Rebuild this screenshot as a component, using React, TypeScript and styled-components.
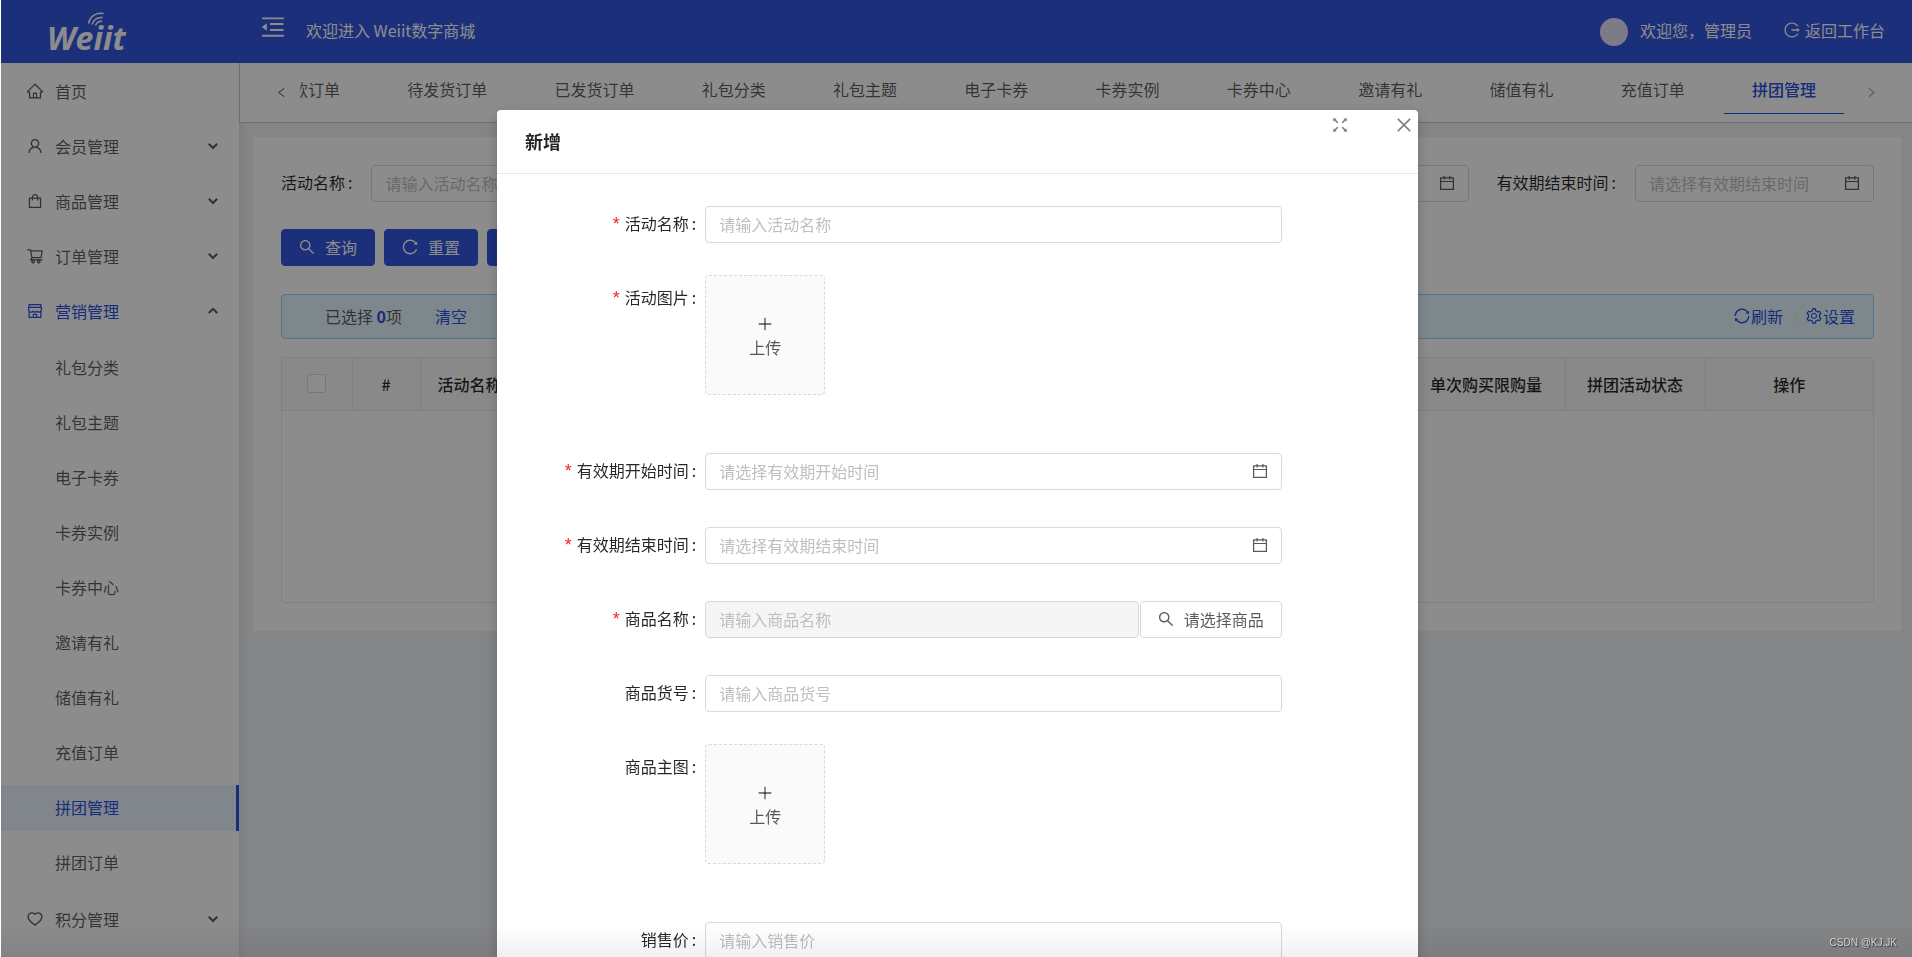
import React from 'react';
import styled, { createGlobalStyle, css } from 'styled-components';
import {
  AiOutlineCalendar,
  AiOutlineClose,
  AiOutlineFullscreen,
  AiOutlineHeart,
  AiOutlineHome,
  AiOutlineLeft,
  AiOutlineLogout,
  AiOutlineMenuFold,
  AiOutlinePlus,
  AiOutlineReload,
  AiOutlineRight,
  AiOutlineSearch,
  AiOutlineSetting,
  AiOutlineShop,
  AiOutlineShopping,
  AiOutlineShoppingCart,
  AiOutlineSync,
  AiOutlineUser,
} from 'react-icons/ai';

const color = {
  primary: '#2a50e0',
  header: '#3357e1',
  text: 'rgba(0, 0, 0, 0.65)',
  heading: 'rgba(0, 0, 0, 0.85)',
  hint: '#bfbfbf',
  border: '#d9d9d9',
  split: '#e8e8e8',
  page: '#f0f2f5',
};

const GlobalStyle = createGlobalStyle`
  *, *::before, *::after { box-sizing: border-box; }
  body {
    margin: 0;
    background: #fff;
    color: ${color.text};
    font: 16px/24px "Noto Sans CJK SC", "Noto Sans", sans-serif;
  }
  button, input { font: inherit; color: inherit; }
  button { margin: 0; padding: 0; border: 0; background: none; cursor: pointer; }
  a { color: inherit; text-decoration: none; }
  ul { margin: 0; padding: 0; list-style: none; }
  svg { flex: none; display: block; }
`;

const Screen = styled.div`
  display: flex;
  flex-direction: column;
  height: 100vh;
  margin-left: 1px;
  overflow: hidden;
  background: ${color.page};
`;

/* ---------- top bar ---------- */

const Header = styled.header`
  flex: none;
  display: flex;
  align-items: center;
  height: 63px;
  padding-right: 27px;
  background: ${color.header};
  color: #fff;
`;

const Logo = styled.a`
  display: flex;
  width: 258px;
  padding: 0 0 2px 46px;
`;

const LogoSvg = styled.svg`
  overflow: visible;
`;

const FoldButton = styled.button`
  margin-bottom: 10px;
`;

const Welcome = styled.span`
  flex: 1;
  margin-left: 19px;
  padding-bottom: 4px;
`;

const Avatar = styled.span`
  width: 28px;
  height: 28px;
  border-radius: 50%;
  background: #e4e2f4;
`;

const UserName = styled.span`
  margin: 0 31px 0 12px;
  padding-bottom: 4px;
`;

const IconLink = styled.a`
  display: flex;
  align-items: center;
  gap: 4px;
  padding-bottom: 3px;
`;

/* ---------- side menu ---------- */

const Body = styled.div`
  flex: 1;
  display: flex;
  min-height: 0;
`;

const Sidebar = styled.nav`
  flex: none;
  width: 238px;
  padding-top: 6px;
  overflow: hidden;
  background: #fff;
  box-shadow: 2px 0 8px rgba(29, 35, 41, 0.08);
`;

const MenuList = styled.ul`
  display: flex;
  flex-direction: column;
  gap: 9px;
`;

const SubMenu = styled(MenuList)`
  padding: 10px 0 2px;
`;

const menuRow = css`
  display: flex;
  align-items: center;
  width: 100%;
  height: 46px;
  padding-bottom: 2px;
  text-align: left;
`;

const MenuButton = styled.button<{ $active?: boolean }>`
  ${menuRow}
  gap: 11px;
  padding: 0 20px 2px 25px;
  color: ${(p) => (p.$active ? color.primary : color.text)};
`;

const MenuText = styled.span`
  flex: 1;
`;

const SubLink = styled.a<{ $active?: boolean }>`
  ${menuRow}
  padding-left: 54px;
  border-right: 3px solid transparent;
  ${(p) =>
    p.$active &&
    css`
      color: ${color.primary};
      background: #ecf5ff;
      border-color: ${color.primary};
    `}
`;

const ArrowSvg = styled.svg`
  color: ${color.text};
`;

/* ---------- tabs ---------- */

const Main = styled.main`
  flex: 1;
  min-width: 0;
`;

const TabBar = styled.div`
  display: flex;
  height: 60px;
  padding-right: 34px;
  background: #fff;
  border-left: 1px solid #c8c8c8;
  border-bottom: 1px solid #c8c8c8;
`;

const TabScroll = styled.button<{ $dim?: boolean }>`
  flex: none;
  padding: 0;
  opacity: ${(p) => (p.$dim ? 0.6 : 0.9)};
`;

const PrevTabs = styled(TabScroll)`
  width: 60px;
  padding-left: 35px;
`;

const NextTabs = styled(TabScroll)`
  padding-left: 21px;
`;

const TabClip = styled.div`
  flex: 1;
  overflow: hidden;
`;

const TabList = styled.div`
  display: flex;
  justify-content: space-between;
  margin-left: -68px;
`;

const Tab = styled.a<{ $active?: boolean }>`
  flex: none;
  height: 51px;
  padding: 14px 28px 0;
  border-bottom: 1px solid ${(p) => (p.$active ? color.primary : 'transparent')};
  color: ${(p) => (p.$active ? color.primary : color.text)};
  font-weight: ${(p) => (p.$active ? 500 : 400)};
`;

/* ---------- list page ---------- */

const Card = styled.section`
  margin: 14px 10px 0 14px;
  padding: 28px;
  border-radius: 3px;
  background: #fff;
`;

const SearchForm = styled.form`
  display: flex;
  gap: 28px;
`;

const SearchItem = styled.div<{ $grow?: boolean }>`
  display: flex;
  align-items: center;
  gap: 19px;
  flex: ${(p) => (p.$grow ? '1' : 'none')};
`;

const Label = styled.label`
  padding-bottom: 3px;
  color: ${color.heading};
  white-space: nowrap;
  &::after {
    content: ':';
    margin-left: 3px;
  }
`;

const Required = styled.span`
  margin-right: 5px;
  color: #f5222d;
  font-family: "Liberation Sans", sans-serif;
  font-size: 18px;
`;

const InputBox = styled.div<{ $narrow?: boolean; $disabled?: boolean }>`
  flex: ${(p) => (p.$narrow ? 'none' : '1')};
  display: flex;
  align-items: center;
  width: ${(p) => (p.$narrow ? '239px' : 'auto')};
  min-width: 0;
  height: 37px;
  padding: 0 12px 2px 13px;
  border: 1px solid ${color.border};
  border-radius: 4px;
  background: ${(p) => (p.$disabled ? '#f5f5f5' : '#fff')};
`;

const TextInput = styled.input`
  flex: 1;
  min-width: 0;
  padding: 0;
  border: 0;
  outline: 0;
  background: none;
  &::placeholder {
    color: ${color.hint};
    opacity: 1;
  }
`;

const Actions = styled.div`
  display: flex;
  gap: 9px;
  margin-top: 27px;
`;

const Button = styled.button<{ $primary?: boolean }>`
  flex: none;
  display: flex;
  align-items: center;
  gap: 9px;
  height: 37px;
  padding: 0 17px 2px 16px;
  border: 1px solid ${(p) => (p.$primary ? color.header : color.border)};
  border-radius: 4px;
  background: ${(p) => (p.$primary ? color.header : '#fff')};
  color: ${(p) => (p.$primary ? '#fff' : color.text)};
`;

const SelectionBar = styled.div`
  display: flex;
  align-items: center;
  height: 45px;
  margin: 28px 0 18px;
  padding: 0 18px 1px 43px;
  border: 1px solid #91d5ff;
  border-radius: 4px;
  background: #e6f7ff;
`;

const Count = styled.b`
  color: ${color.primary};
  font-weight: 700;
`;

const BarText = styled.span`
  flex: 1;
`;

const ClearLink = styled.a`
  margin-left: 33px;
  color: ${color.primary};
`;

const ToolButton = styled.button`
  display: flex;
  align-items: center;
  color: ${color.primary};
`;

const Divider = styled.span`
  width: 1px;
  height: 15px;
  margin: 0 8px 0 13px;
  background: ${color.split};
`;

const TableFrame = styled.div`
  border: 1px solid ${color.split};
  border-radius: 4px;
  overflow: hidden;
`;

const Table = styled.table`
  width: 100%;
  table-layout: fixed;
  border-collapse: collapse;
`;

const Th = styled.th<{ $width?: number; $left?: boolean }>`
  width: ${(p) => (p.$width ? `${p.$width}px` : 'auto')};
  height: 52px;
  padding: 0 17px;
  border-bottom: 1px solid ${color.split};
  border-right: 1px solid ${color.split};
  background: #fafafa;
  color: ${color.heading};
  font-weight: 500;
  text-align: ${(p) => (p.$left ? 'left' : 'center')};
  white-space: nowrap;
  &:last-child { border-right: 0; }
`;

const EmptyCell = styled.td`
  height: 192px;
  padding: 0;
`;

const Checkbox = styled.input`
  appearance: none;
  display: block;
  width: 19px;
  height: 19px;
  margin: 0 auto;
  border: 1px solid ${color.border};
  border-radius: 3px;
  background: #fff;
`;

/* ---------- dialog ---------- */

const Mask = styled.div`
  position: fixed;
  inset: 0 0 0 1px;
  display: flex;
  justify-content: center;
  align-items: flex-start;
  padding: 110px 0 0 2px;
  overflow: hidden;
  background: rgba(0, 0, 0, 0.45);
`;

const Dialog = styled.section`
  width: 921px;
  border-radius: 4px;
  background: #fff;
  box-shadow: 0 4px 14px rgba(0, 0, 0, 0.2);
`;

const DialogHeader = styled.header`
  display: flex;
  align-items: flex-start;
  height: 64px;
  padding: 5px 4px 0 28px;
  border-bottom: 1px solid ${color.split};
`;

const DialogTitle = styled.h2`
  flex: 1;
  margin: 14px 0 0;
  color: ${color.heading};
  font-size: 18px;
  line-height: 24px;
  font-weight: 700;
`;

const DialogTool = styled.button`
  margin-left: 44px;
  color: rgba(0, 0, 0, 0.5);
`;

const DialogForm = styled.form`
  padding: 27px 28px;
`;

const FormRow = styled.div<{ $upload?: boolean }>`
  display: grid;
  grid-template-columns: 5fr 16fr 3fr;
  align-items: start;
  padding-bottom: ${(p) => (p.$upload ? 53 : 32)}px;
`;

const FormLabel = styled(Label)`
  padding: 10px 9px 0 0;
  text-align: right;
`;

const Control = styled.div<{ $upload?: boolean }>`
  display: flex;
  gap: 1px;
  padding-top: ${(p) => (p.$upload ? 0 : 5)}px;
`;

const UploadButton = styled.button`
  display: flex;
  flex-direction: column;
  align-items: center;
  justify-content: center;
  gap: 2px;
  width: 120px;
  height: 120px;
  padding-top: 3px;
  border: 1px dashed ${color.border};
  border-radius: 4px;
  background: #fafafa;
`;

const BottomShade = styled.div`
  position: fixed;
  inset: auto 0 0 1px;
  height: 32px;
  background: linear-gradient(rgba(0, 0, 0, 0), rgba(0, 0, 0, 0.06));
  pointer-events: none;
`;

const Watermark = styled.span`
  position: fixed;
  right: 15px;
  bottom: 7px;
  color: #d2d2d2;
  font: 10px/14px "Liberation Sans", sans-serif;
  text-shadow: 1px 1px 1px rgba(0, 0, 0, 0.6);
`;

/* ---------- pieces ---------- */

const Chevron = ({ up }: { up?: boolean }) => (
  <ArrowSvg width="12" height="12" viewBox="0 0 12 12" fill="none" stroke="currentColor" strokeWidth="2">
    <path d={up ? 'M1.8 8 6 3.8 10.2 8' : 'M1.8 3.8 6 8l4.2-4.2'} />
  </ArrowSvg>
);

const BrandMark = () => (
  <LogoSvg width="96" height="48" viewBox="0 0 96 48" fill="none" role="img" aria-label="Weiit">
    <text x="0" y="43" fill="#fff" fontFamily="'Open Sans', sans-serif" fontSize="32" fontWeight="700" fontStyle="italic">
      Weiit
    </text>
    <g stroke="#fff" strokeWidth="1.5">
      <path d="M41.5 16.5C43 10 48 5.5 56.5 6.5" />
      <path d="M45 17.5C46.5 13 50 10 55.5 10.5" />
      <path d="M48.5 18.5C49.5 15.8 51.5 14 55 14.3" />
    </g>
  </LogoSvg>
);

const topMenu = [
  { text: '会员管理', Icon: AiOutlineUser },
  { text: '商品管理', Icon: AiOutlineShopping },
  { text: '订单管理', Icon: AiOutlineShoppingCart },
];

const marketing = [
  '礼包分类', '礼包主题', '电子卡券', '卡券实例', '卡券中心',
  '邀请有礼', '储值有礼', '充值订单', '拼团管理', '拼团订单',
];

const tabs = [
  '待付款订单', '待发货订单', '已发货订单', '礼包分类', '礼包主题', '电子卡券',
  '卡券实例', '卡券中心', '邀请有礼', '储值有礼', '充值订单', '拼团管理',
];

const current = '拼团管理';

type FieldKind = 'text' | 'date' | 'upload' | 'picker';

const fields: { id: string; label: string; kind: FieldKind; hint?: string; required?: boolean }[] = [
  { id: 'name', label: '活动名称', kind: 'text', hint: '请输入活动名称', required: true },
  { id: 'image', label: '活动图片', kind: 'upload', required: true },
  { id: 'start', label: '有效期开始时间', kind: 'date', hint: '请选择有效期开始时间', required: true },
  { id: 'end', label: '有效期结束时间', kind: 'date', hint: '请选择有效期结束时间', required: true },
  { id: 'goods', label: '商品名称', kind: 'picker', hint: '请输入商品名称', required: true },
  { id: 'sku', label: '商品货号', kind: 'text', hint: '请输入商品货号' },
  { id: 'cover', label: '商品主图', kind: 'upload' },
  { id: 'price', label: '销售价', kind: 'text', hint: '请输入销售价' },
];

const Field = ({ id, kind, hint }: { id: string; kind: FieldKind; hint?: string }) => {
  if (kind === 'upload') {
    return (
      <UploadButton type="button" id={id}>
        <AiOutlinePlus size={18} />
        上传
      </UploadButton>
    );
  }
  return (
    <>
      <InputBox $disabled={kind === 'picker'}>
        <TextInput id={id} placeholder={hint} disabled={kind === 'picker'} />
        {kind === 'date' && <AiOutlineCalendar size={18} />}
      </InputBox>
      {kind === 'picker' && (
        <Button type="button">
          <AiOutlineSearch size={18} />
          请选择商品
        </Button>
      )}
    </>
  );
};

export default function App() {
  return (
    <>
      <GlobalStyle />
      <Screen>
        <Header>
          <Logo href="#">
            <BrandMark />
          </Logo>
          <FoldButton aria-label="收起菜单">
            <AiOutlineMenuFold size={28} />
          </FoldButton>
          <Welcome>欢迎进入 Weiit数字商城</Welcome>
          <Avatar />
          <UserName>欢迎您，管理员</UserName>
          <IconLink href="#">
            <AiOutlineLogout size={18} />
            返回工作台
          </IconLink>
        </Header>

        <Body>
          <Sidebar>
            <MenuList>
              <li>
                <MenuButton>
                  <AiOutlineHome size={18} />
                  <MenuText>首页</MenuText>
                </MenuButton>
              </li>
              {topMenu.map(({ text, Icon }) => (
                <li key={text}>
                  <MenuButton>
                    <Icon size={18} />
                    <MenuText>{text}</MenuText>
                    <Chevron />
                  </MenuButton>
                </li>
              ))}
              <li>
                <MenuButton $active>
                  <AiOutlineShop size={18} />
                  <MenuText>营销管理</MenuText>
                  <Chevron up />
                </MenuButton>
                <SubMenu>
                  {marketing.map((text) => (
                    <li key={text}>
                      <SubLink href="#" $active={text === current}>{text}</SubLink>
                    </li>
                  ))}
                </SubMenu>
              </li>
              <li>
                <MenuButton>
                  <AiOutlineHeart size={18} />
                  <MenuText>积分管理</MenuText>
                  <Chevron />
                </MenuButton>
              </li>
            </MenuList>
          </Sidebar>

          <Main>
            <TabBar>
              <PrevTabs aria-label="上一页">
                <AiOutlineLeft size={13} />
              </PrevTabs>
              <TabClip>
                <TabList>
                  {tabs.map((text) => (
                    <Tab key={text} href="#" $active={text === current}>{text}</Tab>
                  ))}
                </TabList>
              </TabClip>
              <NextTabs $dim aria-label="下一页">
                <AiOutlineRight size={13} />
              </NextTabs>
            </TabBar>

            <Card>
              <SearchForm>
                <SearchItem $grow>
                  <Label htmlFor="q-name">活动名称</Label>
                  <InputBox>
                    <TextInput id="q-name" placeholder="请输入活动名称" />
                  </InputBox>
                </SearchItem>
                <SearchItem>
                  <Label htmlFor="q-start">有效期开始时间</Label>
                  <InputBox $narrow>
                    <TextInput id="q-start" placeholder="请选择有效期开始时间" />
                    <AiOutlineCalendar size={18} />
                  </InputBox>
                </SearchItem>
                <SearchItem>
                  <Label htmlFor="q-end">有效期结束时间</Label>
                  <InputBox $narrow>
                    <TextInput id="q-end" placeholder="请选择有效期结束时间" />
                    <AiOutlineCalendar size={18} />
                  </InputBox>
                </SearchItem>
              </SearchForm>

              <Actions>
                <Button $primary>
                  <AiOutlineSearch size={18} />
                  查询
                </Button>
                <Button $primary>
                  <AiOutlineReload size={18} />
                  重置
                </Button>
                <Button $primary>
                  <AiOutlinePlus size={18} />
                  新增
                </Button>
              </Actions>

              <SelectionBar>
                <BarText>
                  已选择 <Count>0</Count>项
                  <ClearLink href="#">清空</ClearLink>
                </BarText>
                <ToolButton>
                  <AiOutlineSync size={18} />
                  刷新
                </ToolButton>
                <Divider />
                <ToolButton>
                  <AiOutlineSetting size={18} />
                  设置
                </ToolButton>
              </SelectionBar>

              <TableFrame>
                <Table>
                  <thead>
                    <tr>
                      <Th $width={70}>
                        <Checkbox type="checkbox" aria-label="全选" />
                      </Th>
                      <Th $width={68}>#</Th>
                      <Th $left>活动名称</Th>
                      <Th $width={158}>单次购买限购量</Th>
                      <Th $width={140}>拼团活动状态</Th>
                      <Th $width={168}>操作</Th>
                    </tr>
                  </thead>
                  <tbody>
                    <tr>
                      <EmptyCell colSpan={6} />
                    </tr>
                  </tbody>
                </Table>
              </TableFrame>
            </Card>
          </Main>
        </Body>
      </Screen>

      <Mask>
        <Dialog role="dialog" aria-modal="true" aria-labelledby="dialog-title">
          <DialogHeader>
            <DialogTitle id="dialog-title">新增</DialogTitle>
            <DialogTool aria-label="全屏">
              <AiOutlineFullscreen size={20} />
            </DialogTool>
            <DialogTool aria-label="关闭">
              <AiOutlineClose size={20} />
            </DialogTool>
          </DialogHeader>
          <DialogForm>
            {fields.map((f) => (
              <FormRow key={f.id} $upload={f.kind === 'upload'}>
                <FormLabel htmlFor={f.id}>
                  {f.required && <Required>*</Required>}
                  {f.label}
                </FormLabel>
                <Control $upload={f.kind === 'upload'}>
                  <Field id={f.id} kind={f.kind} hint={f.hint} />
                </Control>
              </FormRow>
            ))}
          </DialogForm>
        </Dialog>
      </Mask>
      <BottomShade />
      <Watermark>CSDN @KJ.JK</Watermark>
    </>
  );
}
